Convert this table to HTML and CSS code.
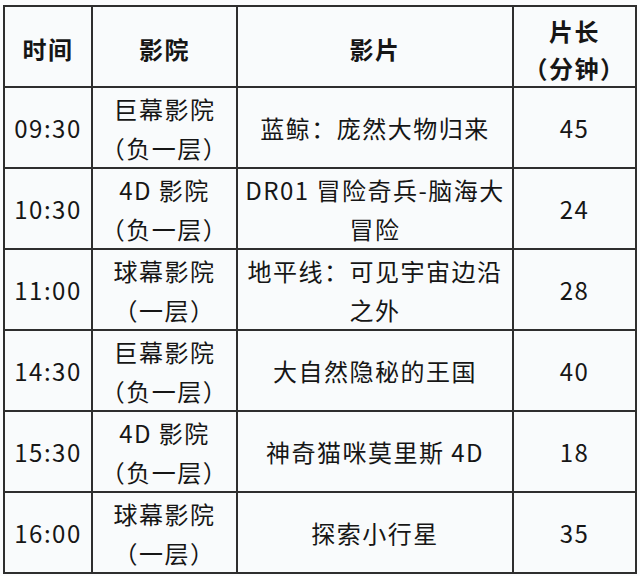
FILE: index.html
```html
<!DOCTYPE html>
<html lang="zh-CN">
<head>
<meta charset="utf-8">
<title>影院排片</title>
<link rel="stylesheet" href="styles.css">
</head>
<body>
<table class="schedule">
  <colgroup>
    <col class="c-time">
    <col class="c-hall">
    <col class="c-film">
    <col class="c-len">
  </colgroup>
  <thead>
    <tr>
      <th>时间</th>
      <th>影院</th>
      <th>影片</th>
      <th>片长<br>（分钟）</th>
    </tr>
  </thead>
  <tbody>
    <tr>
      <td>09:30</td>
      <td>巨幕影院<br>（负一层）</td>
      <td>蓝鲸：庞然大物归来</td>
      <td>45</td>
    </tr>
    <tr>
      <td>10:30</td>
      <td>4D 影院<br>（负一层）</td>
      <td>DR01 冒险奇兵-脑海大<br>冒险</td>
      <td>24</td>
    </tr>
    <tr>
      <td>11:00</td>
      <td>球幕影院<br>（一层）</td>
      <td>地平线：可见宇宙边沿<br>之外</td>
      <td>28</td>
    </tr>
    <tr>
      <td>14:30</td>
      <td>巨幕影院<br>（负一层）</td>
      <td>大自然隐秘的王国</td>
      <td>40</td>
    </tr>
    <tr>
      <td>15:30</td>
      <td>4D 影院<br>（负一层）</td>
      <td>神奇猫咪莫里斯 4D</td>
      <td>18</td>
    </tr>
    <tr>
      <td>16:00</td>
      <td>球幕影院<br>（一层）</td>
      <td>探索小行星</td>
      <td>35</td>
    </tr>
  </tbody>
</table>
</body>
</html>
```
FILE: styles.css
```css
html, body {
  margin: 0;
  padding: 0;
  background: #fbfcfd;
}
body {
  padding: 5px 0 0 3px;
  font-family: "Noto Sans CJK SC", "Noto Sans", sans-serif;
  color: #161616;
}
.schedule {
  border-collapse: collapse;
  table-layout: fixed;
  width: 634px;
  background: #f9fbfc;
}
.c-time { width: 88px; }
.c-hall { width: 145px; }
.c-film { width: 276px; }
.c-len { width: 123px; }
.schedule th,
.schedule td {
  border: 2px solid #2e2e2e;
  height: 79px;
  padding: 0;
  text-align: center;
  vertical-align: middle;
  font-size: 24px;
  line-height: 39px;
  letter-spacing: 1.5px;
  font-weight: 400;
  white-space: nowrap;
}
.schedule th {
  font-weight: 700;
  padding-top: 4px;
  height: 75px;
  line-height: 37px;
}
```
